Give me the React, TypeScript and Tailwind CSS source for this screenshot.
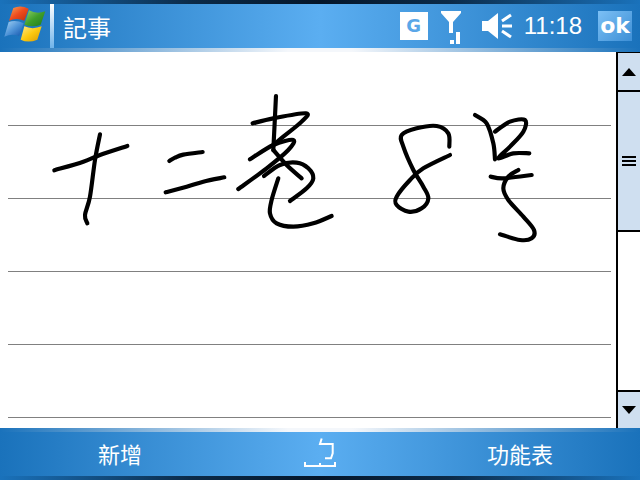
const sans = "font-['Liberation_Sans','Noto_Sans_CJK_TC',sans-serif]";

// ink strokes, traced at 3x from the note
const strokesLeft = [
  [[43, 241], [130, 215], [180, 195], [262, 168]],
  [[180, 133], [165, 210], [150, 320], [135, 375], [142, 400]],
  [[388, 213], [405, 203], [430, 194], [488, 186]],
  [[377, 307], [440, 290], [490, 275], [553, 262]],
  [[708, 18], [704, 100], [700, 180]],
  [[638, 100], [700, 85], [798, 70], [785, 95], [730, 140], [700, 165]],
  [[630, 208], [700, 165], [760, 150], [745, 180], [680, 235], [595, 297]],
  [[700, 180], [740, 225], [785, 265]],
  [[672, 258], [720, 225], [770, 218], [805, 235], [820, 265], [800, 295], [750, 333]],
  [[715, 265], [695, 330], [690, 370], [710, 400], [760, 410], [820, 400], [875, 378]],
];

const strokesRight = [
  [[208, 140], [205, 100], [170, 78], [110, 85], [65, 105], [70, 140], [100, 210], [130, 260], [145, 295], [125, 325], [85, 335], [50, 315], [50, 290], [90, 240], [130, 205], [210, 165]],
  [[285, 45], [320, 70], [340, 130], [345, 178]],
  [[345, 95], [390, 65], [435, 60], [430, 95], [390, 140], [355, 175], [400, 160], [448, 160]],
  [[332, 230], [370, 235], [455, 225]],
  [[415, 210], [385, 230], [370, 265], [385, 300], [430, 350], [462, 390], [455, 415], [420, 420], [360, 403]],
];

// catmull-rom through the traced points
function toPath(pts: number[][]) {
  let d = `M${pts[0][0]} ${pts[0][1]}`;
  for (let i = 0; i < pts.length - 1; i++) {
    const p0 = pts[Math.max(i - 1, 0)];
    const p1 = pts[i];
    const p2 = pts[i + 1];
    const p3 = pts[Math.min(i + 2, pts.length - 1)];
    const c1x = p1[0] + (p2[0] - p0[0]) / 6;
    const c1y = p1[1] + (p2[1] - p0[1]) / 6;
    const c2x = p2[0] - (p3[0] - p1[0]) / 6;
    const c2y = p2[1] - (p3[1] - p1[1]) / 6;
    d += ` C${c1x} ${c1y} ${c2x} ${c2y} ${p2[0]} ${p2[1]}`;
  }
  return d;
}

function Ink() {
  return (
    <svg className="absolute left-0 top-0" width="616" height="376" viewBox="0 52 616 376" fill="none" stroke="#000" strokeWidth="12.5" strokeLinecap="round" strokeLinejoin="round">
      <g transform="translate(40 90) scale(0.3333)">
        {strokesLeft.map((s, i) => <path key={i} d={toPath(s)} />)}
      </g>
      <g transform="translate(380 100) scale(0.3333)">
        {strokesRight.map((s, i) => <path key={i} d={toPath(s)} />)}
      </g>
    </svg>
  );
}

function WinLogo() {
  return (
    <svg width="50" height="48" viewBox="0 0 150 144" className="shrink-0">
      <defs>
        <linearGradient id="r" x1="0" y1="0" x2="1" y2="1"><stop offset="0" stopColor="#f7a65a" /><stop offset="0.5" stopColor="#ee4a1c" /><stop offset="1" stopColor="#b8300f" /></linearGradient>
        <linearGradient id="g" x1="0" y1="0" x2="1" y2="1"><stop offset="0" stopColor="#8fd06a" /><stop offset="0.5" stopColor="#3f9e2a" /><stop offset="1" stopColor="#1f7a1c" /></linearGradient>
        <linearGradient id="b" x1="0" y1="0" x2="1" y2="1"><stop offset="0" stopColor="#a8d4f4" /><stop offset="0.5" stopColor="#4f94d8" /><stop offset="1" stopColor="#0e4fa8" /></linearGradient>
        <linearGradient id="y" x1="0" y1="0" x2="1" y2="1"><stop offset="0" stopColor="#fde98a" /><stop offset="0.5" stopColor="#fcc90f" /><stop offset="1" stopColor="#d89a05" /></linearGradient>
      </defs>
      <g transform="translate(0 -12)">
        <path d="M40 30 Q62 20 86 32 L73 68 Q50 58 27 68 Z" fill="url(#r)" />
        <path d="M87 37 Q110 50 136 40 L122 80 Q97 90 73 80 Z" fill="url(#g)" />
        <path d="M26 72 Q48 64 71 76 L57 114 Q35 106 13 116 Z" fill="url(#b)" />
        <path d="M73 85 Q97 96 125 85 L112 125 Q85 136 62 125 Z" fill="url(#y)" />
      </g>
    </svg>
  );
}

function Signal() {
  return (
    <svg width="22" height="36" viewBox="0 0 22 36" className="shrink-0" fill="#fff">
      <path d="M0 3 H20 V5 L12 14 V25 H8 V14 L0 5 Z" />
      <rect x="9" y="32" width="4" height="4" />
      <rect x="15" y="24" width="4" height="12" />
    </svg>
  );
}

function Speaker() {
  return (
    <svg width="32" height="28" viewBox="0 0 32 28" className="shrink-0" fill="#fff" stroke="none">
      <path d="M0 9 H6 L16 1 V27 L6 19 H0 Z" />
      <path d="M20 9 L29 3 M20 14 H30 M20 19 L29 25" stroke="#fff" strokeWidth="3" fill="none" />
    </svg>
  );
}

function SipIcon() {
  return (
    <svg width="32" height="32" viewBox="0 0 32 32" fill="none" stroke="#fff" strokeWidth="2">
      <path d="M1 24 V28 H31 V24 M16 25 V28" />
      <path d="M17.7 0.5 L16 6 H28.7 V15.3 L27 20.3 H21" />
    </svg>
  );
}

const barGradient = "bg-[linear-gradient(90deg,#1a72bb_0%,#5baef1_50%,#1a72bb_100%)]";
const darkStrip = "bg-[linear-gradient(90deg,#1a72bb_0%,#0b2a48_30%,#04162a_50%,#0b2a48_70%,#1a72bb_100%)]";
const lightStrip = "bg-[linear-gradient(90deg,#1a72bb_0%,#f4f7fb_45%,#f4f7fb_55%,#1a72bb_100%)]";

export default function App() {
  return (
    <div className={`flex h-[480px] w-[640px] flex-col overflow-hidden bg-white ${sans}`}>
      {/* title bar */}
      <header className="flex h-[52px] shrink-0 flex-col">
        <div className={`h-1 ${darkStrip}`} />
        <div className={`flex h-11 items-center text-white ${barGradient}`}>
          <WinLogo />
          <div className="h-11 w-1 bg-[linear-gradient(180deg,#ffffff,#6fb3ea)]" />
          <span className="ml-[9px] pt-[5px] text-[24px] leading-none">記事</span>
          <div className="ml-auto flex items-center">
            <div className="flex h-[28px] w-[28px] items-center justify-center bg-white text-[18px] font-bold leading-none text-[#5aa7e8] font-['DejaVu_Sans',sans-serif]">G</div>
            <div className="ml-[13px]"><Signal /></div>
            <div className="ml-[19px]"><Speaker /></div>
            <span className="ml-[10px] text-[24px] leading-none">11:18</span>
            <div className="ml-[16px] mr-2 flex h-[30px] w-[34px] items-center justify-center bg-[linear-gradient(135deg,#7cc0f5,#3d8fd6)] text-[22px] font-bold leading-none font-['DejaVu_Sans',sans-serif]">ok</div>
          </div>
        </div>
        <div className={`h-1 ${lightStrip}`} />
      </header>

      {/* note + scrollbar */}
      <main className="flex min-h-0 flex-1">
        <div className="relative flex-1 overflow-hidden bg-white pl-2 pr-[5px] pt-[73px]">
          <div className="flex flex-col gap-[72px]">
            <div className="h-px bg-[#808080]" />
            <div className="h-px bg-[#808080]" />
            <div className="h-px bg-[#808080]" />
            <div className="h-px bg-[#808080]" />
            <div className="h-px bg-[#808080]" />
          </div>
          <Ink />
        </div>
        <div className="flex w-6 shrink-0 flex-col border-l-2 border-black bg-white">
          <div className="flex h-[40px] shrink-0 items-center justify-center border-t border-b-2 border-black bg-[#cfdff0]">
            <div className="h-0 w-0 border-x-[7.5px] border-b-[8px] border-x-transparent border-b-black" />
          </div>
          <div className="flex h-[140px] shrink-0 flex-col items-center justify-center gap-[2px] border-b-2 border-black bg-[#cfdff0]">
            <div className="h-[2px] w-[14px] bg-black" />
            <div className="h-[2px] w-[14px] bg-black" />
            <div className="h-[2px] w-[14px] bg-black" />
          </div>
          <div className="flex-1" />
          <div className="flex h-[38px] shrink-0 items-center justify-center border-t-2 border-black bg-[#cfdff0]">
            <div className="h-0 w-0 border-x-[7.5px] border-t-[8px] border-x-transparent border-t-black" />
          </div>
        </div>
      </main>

      {/* command bar */}
      <footer className="flex h-[52px] shrink-0 flex-col">
        <div className={`h-1 ${lightStrip}`} />
        <div className={`grid h-11 grid-cols-[240px_160px_240px] items-center text-[22px] leading-none text-white ${barGradient}`}>
          <span className="pt-[4px] text-center">新增</span>
          <div className="flex justify-center"><SipIcon /></div>
          <span className="pt-[4px] text-center">功能表</span>
        </div>
        <div className={`h-1 ${darkStrip}`} />
      </footer>
    </div>
  );
}
